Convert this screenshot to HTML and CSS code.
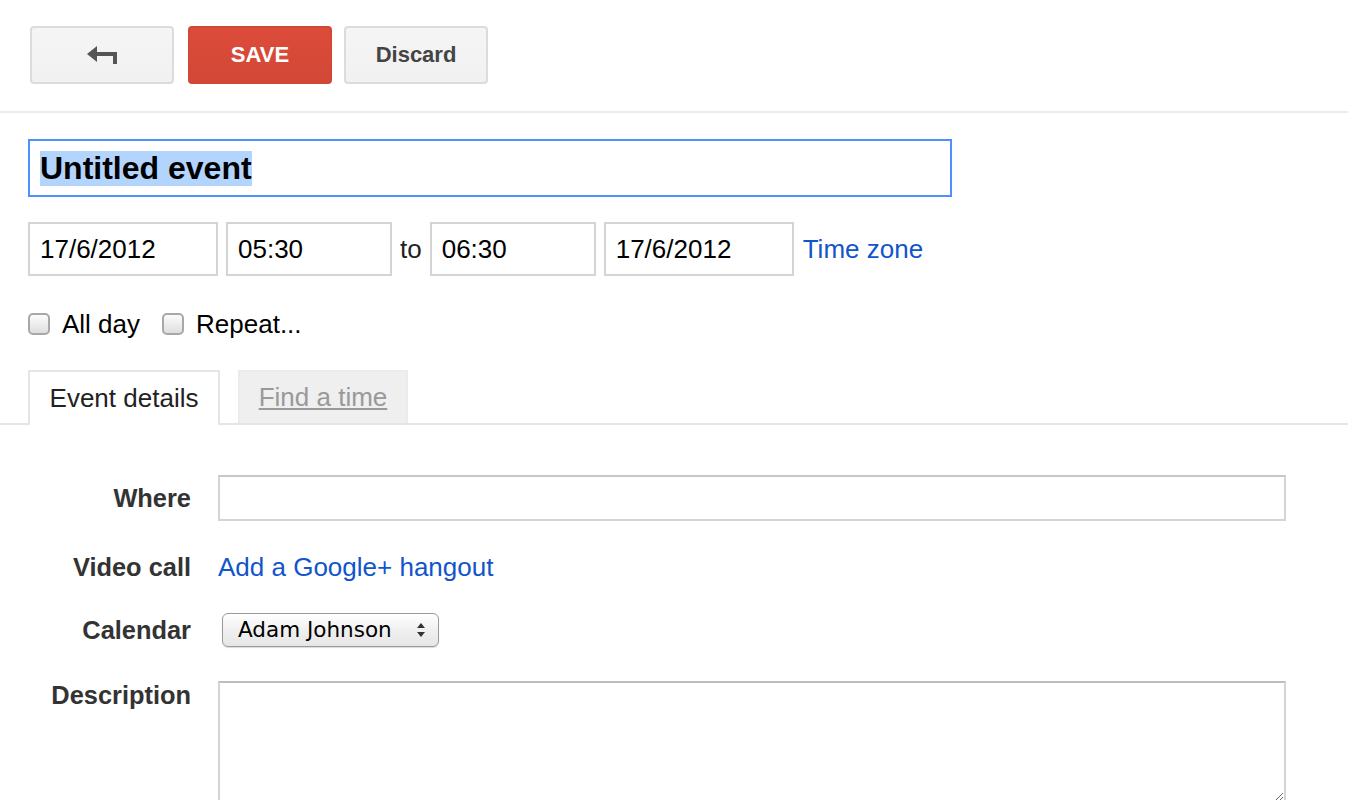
FILE: index.html
```html
<!DOCTYPE html>
<html>
<head>
<meta charset="utf-8">
<link rel="stylesheet" href="styles.css">
</head>
<body>
<div class="toolbar">
  <div class="btn btn-back"><svg width="30" height="18" viewBox="0 0 30 18"><path d="M0 8 L10 0 L10 16 Z" fill="#555"/><rect x="9" y="6" width="21" height="4" fill="#555"/><rect x="26" y="6" width="4" height="12" fill="#555"/></svg></div>
  <div class="btn btn-save">SAVE</div>
  <div class="btn btn-discard">Discard</div>
</div>
<div class="main">
  <div class="title-input"><span class="sel">Untitled event</span></div>
  <div class="date-row">
    <div class="field f-date">17/6/2012</div>
    <div class="field f-time">05:30</div>
    <span class="to">to</span>
    <div class="field f-time">06:30</div>
    <div class="field f-date">17/6/2012</div>
    <a class="link tz">Time zone</a>
  </div>
  <div class="check-row">
    <span class="cb"></span><span class="cb-label">All day</span>
    <span class="cb"></span><span class="cb-label">Repeat...</span>
  </div>
</div>
<div class="tabs">
  <div class="tab active">Event details</div>
  <div class="tab inactive"><span>Find a time</span></div>
</div>
<div class="form">
  <div class="label l-mid">Where</div>
  <div class="where"></div>
  <div class="label l-mid">Video call</div>
  <div class="value"><a class="link">Add a Google+ hangout</a></div>
  <div class="label l-mid">Calendar</div>
  <div class="value"><div class="select"><span>Adam Johnson</span><svg width="10" height="16" viewBox="0 0 10 16"><path d="M1 6 L5 1 L9 6 Z" fill="#333"/><path d="M1 10 L5 15 L9 10 Z" fill="#333"/></svg></div></div>
  <div class="label l-top">Description</div>
  <div class="value"><textarea class="desc"></textarea></div>
</div>
</body>
</html>
```
FILE: styles.css
```css
html, body {
  margin: 0;
  padding: 0;
  background: #fff;
  font-family: "Liberation Sans", Arial, sans-serif;
  color: #222;
  overflow: hidden;
}
.toolbar {
  display: flex;
  align-items: center;
  padding: 26px 30px 27px;
  border-bottom: 2px solid #ebebeb;
}
.btn {
  box-sizing: border-box;
  width: 144px;
  height: 58px;
  border-radius: 4px;
  display: flex;
  align-items: center;
  justify-content: center;
  font-weight: bold;
  font-size: 22px;
}
.btn-back {
  background: linear-gradient(#f5f5f5, #f1f1f1);
  border: 2px solid #dcdcdc;
}
.btn-save {
  margin-left: 14px;
  background: linear-gradient(#dd4b39, #d14836);
  border: 2px solid #d14836;
  color: #fff;
}
.btn-discard {
  margin-left: 12px;
  background: linear-gradient(#f5f5f5, #f1f1f1);
  border: 2px solid #dcdcdc;
  color: #444;
}
.main {
  padding-left: 28px;
}
.title-input {
  box-sizing: border-box;
  margin-top: 26px;
  width: 924px;
  height: 58px;
  border: 2px solid #4d90fe;
  padding-left: 10px;
  display: flex;
  align-items: center;
  font-size: 32px;
  font-weight: bold;
  color: #000;
}
.sel {
  background: #b3d4fc;
  line-height: 35px;
}
.date-row {
  display: flex;
  align-items: center;
  margin-top: 25px;
  font-size: 26px;
}
.field {
  box-sizing: border-box;
  height: 54px;
  border: 2px solid #d4d4d4;
  padding-left: 10px;
  display: flex;
  align-items: center;
  color: #000;
}
.f-date { width: 190px; }
.f-time { width: 166px; }
.field + .field { margin-left: 8px; }
.to { margin: 0 8px; color: #222; }
.link {
  color: #1155cc;
  text-decoration: none;
}
.tz { margin-left: 9px; }
.check-row {
  display: flex;
  align-items: center;
  margin-top: 33px;
  height: 30px;
  font-size: 26px;
  color: #000;
}
.cb {
  box-sizing: border-box;
  width: 22px;
  height: 22px;
  border: 2px solid #a8a8a8;
  border-radius: 5px;
  background: linear-gradient(#fcfcfc, #dedede);
}
.cb-label {
  margin-left: 12px;
  margin-right: 22px;
}
.tabs {
  display: flex;
  align-items: flex-end;
  margin-top: 31px;
  padding-left: 28px;
  border-bottom: 2px solid #e5e5e5;
  height: 53px;
}
.tab {
  box-sizing: border-box;
  height: 53px;
  display: flex;
  align-items: center;
  justify-content: center;
  font-size: 26px;
}
.tab.active {
  width: 192px;
  height: 55px;
  margin-bottom: -2px;
  background: #fff;
  border: 2px solid #e5e5e5;
  border-bottom: none;
  color: #222;
}
.tab.inactive {
  width: 170px;
  margin-left: 18px;
  background: #efefef;
  border: 2px solid #ebebeb;
  border-bottom: none;
  color: #999;
}
.tab.inactive span {
  text-decoration: underline;
}
.form {
  display: grid;
  grid-template-columns: 191px 1068px;
  column-gap: 27px;
  row-gap: 32px;
  margin-top: 50px;
  font-size: 26px;
}
.label {
  font-weight: bold;
  font-size: 25.4px;
  color: #333;
  text-align: right;
  line-height: 28px;
}
.l-mid { align-self: center; }
.l-top { align-self: start; padding-top: 2px; }
.value {
  line-height: 28px;
  display: flex;
  align-items: center;
}
.where {
  box-sizing: border-box;
  height: 46px;
  border: 2px solid #d4d4d4;
  border-top-color: #c8c8c8;
}
.select {
  box-sizing: border-box;
  margin-left: 4px;
  width: 217px;
  height: 34px;
  border: 1px solid #9a9a9a;
  border-radius: 6px;
  background: linear-gradient(#ffffff, #f0f0f0 50%, #e6e6e6);
  box-shadow: 0 1px 1px rgba(0,0,0,0.15);
  display: flex;
  align-items: center;
  justify-content: space-between;
  padding: 0 12px 0 15px;
  font-family: "DejaVu Sans", sans-serif;
  font-size: 21.5px;
  color: #000;
}
.desc {
  display: block;
  box-sizing: border-box;
  margin-top: 2px;
  width: 1068px;
  height: 122px;
  border: 2px solid #d4d4d4;
  border-top-color: #bdbdbd;
  outline: none;
  resize: both;
}
```
